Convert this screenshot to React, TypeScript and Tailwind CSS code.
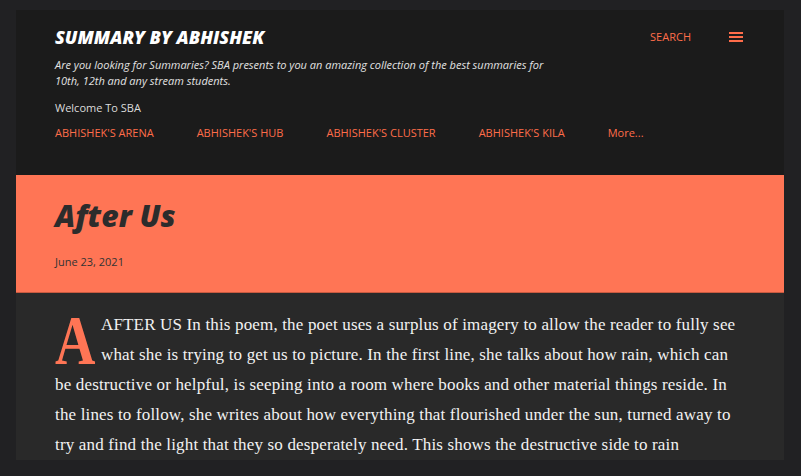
const navLinks = ["Abhishek's Arena", "Abhishek's Hub", "Abhishek's Cluster", "Abhishek's Kila"];

function MenuIcon() {
  return (
    <svg width="14" height="10" viewBox="0 0 14 10" className="block">
      <rect x="0" y="0" width="14" height="2" fill="#ff6d4a" />
      <rect x="0" y="4" width="14" height="2" fill="#ff6d4a" />
      <rect x="0" y="8" width="14" height="2" fill="#ff6d4a" />
    </svg>
  );
}

export default function App() {
  return (
    <div className="min-h-[476px] bg-[#212123] px-4 pt-[10px] pb-4 font-['Open_Sans',sans-serif]">
      <div className="w-[768px]">
        {/* header */}
        <header className="bg-[#1b1b1b] px-[39px] pt-[13px] pb-[34px]">
          <div className="flex items-center justify-between">
            <h1 className="text-[18px] leading-[28px] font-extrabold italic text-white">
              SUMMARY BY ABHISHEK
            </h1>
            <div className="flex items-center gap-[38px] pr-[2px]">
              <span className="text-[11px] font-medium text-[#ff6d4a]">SEARCH</span>
              <MenuIcon />
            </div>
          </div>
          <p className="mt-[6px] max-w-[500px] text-[11px] leading-4 italic text-[#e2e2e2]">
            Are you looking for Summaries? SBA presents to you an amazing collection of the best summaries for 10th, 12th and any stream students.
          </p>
          <p className="mt-[11px] text-[11px] leading-4 text-[#dcdcdc]">Welcome To SBA</p>
          <nav className="mt-[9px] flex gap-[43px] text-[11px] leading-4 font-medium text-[#ff6d4a]">
            {navLinks.map((l) => (
              <span key={l} className="uppercase">{l}</span>
            ))}
            <span>More...</span>
          </nav>
        </header>

        {/* post title band */}
        <div className="bg-[#ff7555] px-[39px] pt-[21px] pb-[22px] border-b border-[#c85a40]">
          <h2 className="text-[30px] leading-[40px] font-extrabold italic text-[#2c2c2c]">After Us</h2>
          <div className="mt-[18px] text-[11px] leading-4 text-[#333333]">June 23, 2021</div>
        </div>

        {/* body */}
        <div className="bg-[#292929] px-[39px] pt-[17px]">
          <p className="font-['Liberation_Serif',serif] text-[17px] leading-[30px] tracking-[0.16px] text-[#f2f2f2]">
            <span className="float-left mr-[6px] mt-[2px] w-[40px] h-[54px] text-[70px] leading-[58px] font-bold tracking-normal text-[#ff7555]">
              <span className="inline-block origin-left scale-x-[0.8]">A</span>
            </span>
            AFTER US In this poem, the poet uses a surplus of imagery to allow the reader to fully see what she is trying to get us to picture. In the first line, she talks about how rain, which can be destructive or helpful, is seeping into a room where books and other material things reside. In the lines to follow, she writes about how everything that flourished under the sun, turned away to try and find the light that they so desperately need. This shows the destructive side to rain
          </p>
        </div>
      </div>
    </div>
  );
}
